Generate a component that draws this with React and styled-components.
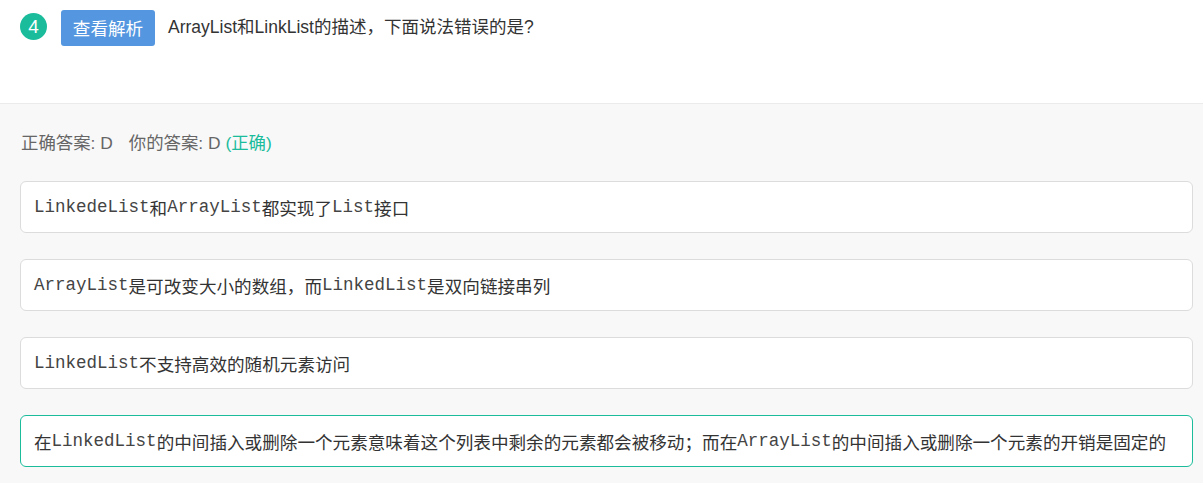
import React from "react";
import styled, { createGlobalStyle } from "styled-components";

const Global = createGlobalStyle`
  html, body { margin: 0; padding: 0; }
  body {
    font-family: "Liberation Sans", "Noto Sans CJK SC", sans-serif;
    background: #f8f8f8;
  }
`;

const Page = styled.div`
  min-height: 100vh;
  display: flex;
  flex-direction: column;
  background: #f8f8f8;
`;

const Header = styled.header`
  height: 104px;
  box-sizing: border-box;
  background: #fff;
  border-bottom: 1px solid #ebebeb;
  display: flex;
  align-items: flex-start;
  padding: 10px 0 0 20px;
`;

const Badge = styled.span`
  width: 27px;
  height: 27px;
  margin-top: 12px;
  border-radius: 50%;
  background: #1abc9c;
  color: #fff;
  font-size: 19px;
  line-height: 1;
  display: flex;
  align-items: center;
  justify-content: center;
  font-family: "Liberation Sans", sans-serif;
  align-self: flex-start;
  margin-top: 3px;
`;

const ViewButton = styled.button`
  margin-left: 14px;
  height: 36px;
  width: 94px;
  border: none;
  border-radius: 3px;
  background: #5497e0;
  color: #fff;
  font-size: 17.6px;
  font-family: "Noto Sans CJK SC", sans-serif;
  padding: 0;
  line-height: 36px;
`;

const Question = styled.div`
  margin-left: 13px;
  line-height: 34px;
  font-size: 17.5px;
  color: #333;
  font-family: "Liberation Sans", "Noto Sans CJK SC", sans-serif;
`;

const Body = styled.section`
  flex: 1;
  padding: 27px 10px 0 20px;
  display: flex;
  flex-direction: column;
`;

const AnswerLine = styled.div`
  line-height: 24px;
  font-size: 17.4px;
  color: #666;
  margin-left: 1px;
  margin-bottom: 26px;
`;

const Gap = styled.span`
  display: inline-block;
  width: 16px;
`;

const Correct = styled.span`
  color: #1abc9c;
`;

const OptionList = styled.div`
  display: flex;
  flex-direction: column;
  gap: 26px;
`;

const Option = styled.div`
  height: 52px;
  box-sizing: border-box;
  background: #fff;
  border: 1px solid ${(p) => (p.$active ? "#1abc9c" : "#dcdcdc")};
  border-radius: 6px;
  display: flex;
  align-items: center;
  padding: 0 13px;
  font-size: 17.6px;
  color: #333;
  font-family: "Noto Sans CJK SC", sans-serif;
  white-space: nowrap;
`;

const Code = styled.span`
  font-family: "Liberation Mono", monospace;
  font-size: 17.5px;
  color: #444;
`;

const options = [
  [["c", "LinkedeList"], ["t", "和"], ["c", "ArrayList"], ["t", "都实现了"], ["c", "List"], ["t", "接口"]],
  [["c", "ArrayList"], ["t", "是可改变大小的数组，而"], ["c", "LinkedList"], ["t", "是双向链接串列"]],
  [["c", "LinkedList"], ["t", "不支持高效的随机元素访问"]],
  [
    ["t", "在"],
    ["c", "LinkedList"],
    ["t", "的中间插入或删除一个元素意味着这个列表中剩余的元素都会被移动；而在"],
    ["c", "ArrayList"],
    ["t", "的中间插入或删除一个元素的开销是固定的"],
  ],
];

export default function App() {
  return (
    <Page>
      <Global />
      <Header>
        <Badge>4</Badge>
        <ViewButton>查看解析</ViewButton>
        <Question>ArrayList和LinkList的描述，下面说法错误的是?</Question>
      </Header>
      <Body>
        <AnswerLine>
          正确答案: D<Gap />你的答案: D <Correct>(正确)</Correct>
        </AnswerLine>
        <OptionList>
          {options.map((parts, i) => (
            <Option key={i} $active={i === 3}>
              {parts.map(([k, s], j) =>
                k === "c" ? <Code key={j}>{s}</Code> : <span key={j}>{s}</span>
              )}
            </Option>
          ))}
        </OptionList>
      </Body>
    </Page>
  );
}
